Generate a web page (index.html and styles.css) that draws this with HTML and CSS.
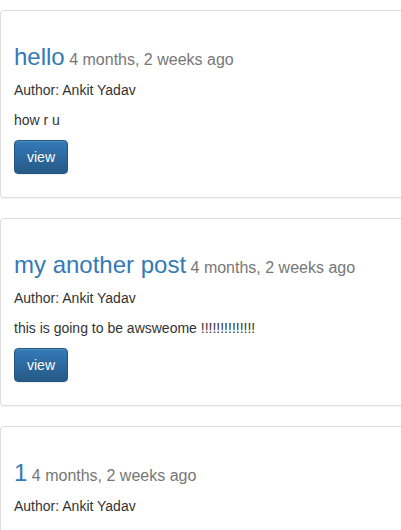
FILE: index.html
```html
<!DOCTYPE html>
<html>
<head>
<meta charset="utf-8">
<link rel="stylesheet" href="styles.css">
</head>
<body>
<div class="list">
  <div class="post">
    <h3 class="title"><a href="#">hello</a><small> 4 months, 2 weeks ago</small></h3>
    <p>Author: Ankit Yadav</p>
    <p>how r u</p>
    <a class="btn" href="#">view</a>
  </div>
  <div class="post">
    <h3 class="title"><a href="#">my another post</a><small> 4 months, 2 weeks ago</small></h3>
    <p>Author: Ankit Yadav</p>
    <p>this is going to be awsweome !!!!!!!!!!!!!!</p>
    <a class="btn" href="#">view</a>
  </div>
  <div class="post">
    <h3 class="title"><a href="#">1</a><small> 4 months, 2 weeks ago</small></h3>
    <p>Author: Ankit Yadav</p>
  </div>
</div>
</body>
</html>
```
FILE: styles.css
```css
html, body {
  margin: 0;
  padding: 0;
  overflow: hidden;
  background: #fff;
}
body {
  font-family: "Liberation Sans", Arial, sans-serif;
  font-size: 14px;
  line-height: 20px;
  color: #333;
}
.list {
  padding-top: 10px;
  width: calc(100% + 20px);
}
.post {
  border: 1px solid #ddd;
  border-radius: 4px;
  box-shadow: 0 1px 1px rgba(0,0,0,.05);
  padding: 13px;
  margin-bottom: 20px;
  background: #fff;
}
.post p {
  margin: 0 0 10px;
}
.title {
  margin: 20px 0 10px;
  font-size: 24px;
  font-weight: 500;
  line-height: 26px;
}
.title a {
  color: #337ab7;
  text-decoration: none;
}
.title small {
  font-size: 16px;
  font-weight: 400;
  line-height: 1;
  color: #777;
}
.btn {
  display: inline-block;
  box-sizing: border-box;
  height: 34px;
  padding: 6px 12px;
  font-size: 14px;
  line-height: 20px;
  color: #fff;
  text-decoration: none;
  text-shadow: 0 -1px 0 rgba(0,0,0,.2);
  background-image: linear-gradient(to bottom, #337ab7 0, #265a88 100%);
  border: 1px solid #245580;
  border-radius: 4px;
  box-shadow: inset 0 1px 0 rgba(255,255,255,.15), 0 1px 1px rgba(0,0,0,.075);
  margin-bottom: 10px;
  vertical-align: top;
}
```
